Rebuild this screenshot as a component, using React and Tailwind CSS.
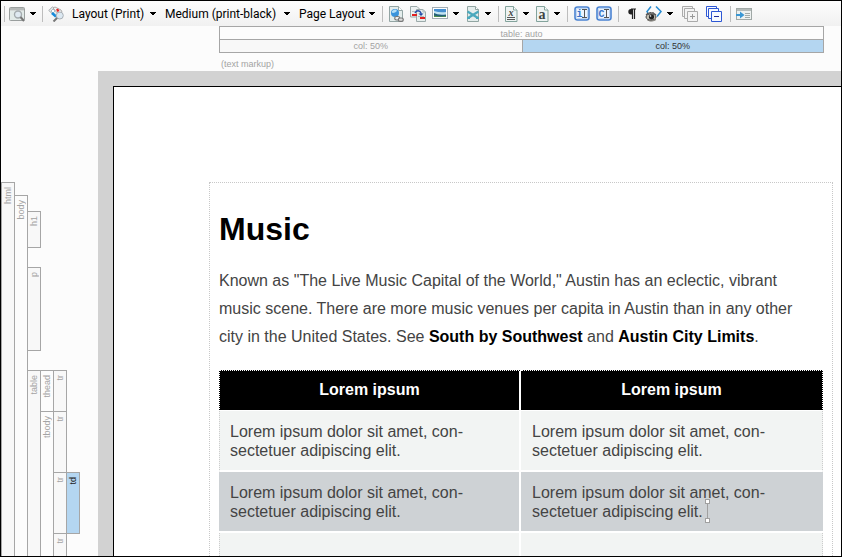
import React from "react";

function Caret() {
  return (
    <svg width="7" height="4" viewBox="0 0 7 4" shapeRendering="crispEdges" aria-hidden="true">
      <path d="M0 0h6v1H5v1H4v1H2V2H1V1H0z" fill="#000" />
    </svg>
  );
}

function Separator() {
  return <span className="h-4 w-px shrink-0 bg-[#bdbdbd]" />;
}

function ToolButton({ label, menu = false, children }) {
  return (
    <button type="button" aria-label={label} title={label} className="flex h-5 shrink-0 items-center gap-[5px]">
      {children}
      {menu && <Caret />}
    </button>
  );
}

function ToolSelect({ label, value, className }) {
  return (
    <label className={`relative flex h-5 shrink-0 items-center ${className}`}>
      <select
        aria-label={label}
        defaultValue={value}
        className="h-5 w-full appearance-none bg-transparent p-0 font-['Roboto',sans-serif] text-[12px] leading-5 text-black outline-none"
      >
        <option>{value}</option>
      </select>
      <span className="pointer-events-none absolute right-0">
        <Caret />
      </span>
    </label>
  );
}

function Svg({ children, w = 16 }) {
  return (
    <svg width={w} height="16" viewBox={`0 0 ${w} 16`} fill="none" className="shrink-0" aria-hidden="true">
      {children}
    </svg>
  );
}

function Page() {
  return (
    <>
      <path d="M.5.5h9l4 4v11H.5z" fill="#e4edec" stroke="#93a5a4" />
      <path d="M9.5.5v4h4" fill="#fff" stroke="#93a5a4" />
    </>
  );
}

function PreviewIcon() {
  return (
    <Svg>
      <rect x=".5" y="1.5" width="15" height="13" rx="1" fill="#e2eae8" stroke="#9a9f9e" />
      <path d="M1 2h14v2H1z" fill="#b5b9b8" />
      <path d="M1 4.5h14" stroke="#d4d8d7" />
      <circle cx="9" cy="8.5" r="3.5" fill="#dfe9f1" stroke="#a4abae" strokeWidth="1.4" />
      <path d="m11.5 11 3.5 4" stroke="#777" strokeWidth="2" />
    </Svg>
  );
}

function StylesIcon() {
  return (
    <Svg>
      <path d="m.8 4.5 3.7-3.7L14 9.5 10 13z" fill="#e9eeef" stroke="#a4a9ab" />
      <path d="m5 2 2-1 6 3 1 2-3 3z" fill="#f2f4f4" stroke="#aaa" />
      <path d="m3 5 2-2 2 2-2 2z" fill="#fff" stroke="#aebbc2" />
      <path d="m4 7 4 3.5" stroke="#168bdc" strokeWidth="2.6" />
      <path d="m9 3 1.500 2.500" stroke="#e52224" strokeWidth="2.400" />
      <circle cx="11.8" cy="9.5" r="3.5" fill="#dce8f1" stroke="#a8afb5" />
      <path d="m9 12-3.5 3.5" stroke="#777" strokeWidth="2" />
    </Svg>
  );
}

function LinkIcon() {
  return (
    <Svg w={15}>
      <Page />
      <circle cx="6" cy="7" r="4" fill="#3b94dc" />
      <path d="M3 5c2-2 4-2 5 0L6 6.500 4 7 3 6.500z" fill="#b5dff7" />
      <rect x="5.7" y="10.5" width="5" height="3.5" rx="1.7" fill="#eee" stroke="#777" strokeWidth="1.2" />
      <rect x="9.3" y="12" width="5" height="3.4" rx="1.7" fill="#ddd" stroke="#777" strokeWidth="1.2" />
    </Svg>
  );
}

function CrossRefIcon() {
  return (
    <Svg>
      <path d="M.5.5H7L9.5 3v8H.5z" fill="#edf2f2" stroke="#9caaaa" />
      <path d="M6.5 3.5H13l2.5 2.5v9.5h-9z" fill="#e6eeed" stroke="#9caaaa" />
      <path d="M13 3.5V6h2.500M2 5.500h3M8 10.500h6" stroke="#b1bdbd" />
      <path d="M2 8h5v2H2zM10 11h5v2h-5z" fill="#e32122" />
      <path d="M5 7c1-3 5-3 6 0v1" stroke="#2148a5" strokeWidth="1.3" />
      <path d="M8.500 7.500h5L11 10z" fill="#2148a5" />
    </Svg>
  );
}

function ImageIcon() {
  return (
    <Svg>
      <rect x=".5" y="1.5" width="15" height="11" fill="#fff" stroke="#a2adb3" />
      <path d="M2 3h12v8H2z" fill="#458fd0" />
      <path d="M2 5q6 2 12 1v3H2z" fill="#c3e5f2" />
      <path d="M2 7q4 2.500 12 1.500V11H2z" fill="#24607a" />
      <path d="M2 9.500q6 1.500 12 .5v1H2z" fill="#529348" />
    </Svg>
  );
}

function VariableIcon() {
  return (
    <Svg w={14}>
      <path d="M1.5.5h8l3 3v12h-11z" fill="#e4edec" stroke="#91a5a2" />
      <path d="M9.5.5v3h3" fill="#fff" stroke="#91a5a2" />
      <path d="M1.500 5.500 12 12M12.500 5.500 2 12" stroke="#4aa9bd" strokeWidth="2.200" />
      <path d="M1 12h3M10 12h3" stroke="#4aa9bd" strokeWidth="2" />
    </Svg>
  );
}

function LetterPage({ letter, underlined }) {
  return (
    <Svg w={13}>
      <path d="M.5.5h8L12 4v11.5H.5z" fill="#edf3f2" stroke="#83a39c" />
      <path d="M8.5.5V4H12" fill="#fff" stroke="#83a39c" />
      <text
        x="6"
        y={underlined ? 10 : 13}
        textAnchor="middle"
        fill="#3e4443"
        fontFamily="Liberation Serif, serif"
        fontWeight="700"
        fontStyle={underlined ? "italic" : "normal"}
        fontSize={underlined ? 10 : 14}
      >
        {letter}
      </text>
      {underlined && <path d="M2 11.5h8M2 13.5h8" stroke="#555" />}
    </Svg>
  );
}

function CursorBadge({ letter }) {
  return (
    <Svg>
      <rect x="1" y="1" width="14" height="13" rx="2.5" fill="#edf5ff" stroke="#4a83d2" strokeWidth="1.600" />
      <rect x="2.5" y="2.5" width="11" height="10" rx="1" stroke="#c0d8f3" />
      <text x="5.5" y="11" textAnchor="middle" fill="#3975c9" fontFamily="Liberation Mono, monospace" fontWeight="700" fontSize="10">
        {letter}
      </text>
      <path d="M8 3.5h5M8 11.5h5M10.5 4v7" stroke="#555" />
    </Svg>
  );
}

function PilcrowIcon() {
  return (
    <Svg w={10}>
      <path d="M4 3h5M5.500 3v10M7.500 3v10" stroke="#222" strokeWidth="1.2" />
      <path d="M5 3H4a2.700 2.700 0 0 0 0 5.400h1z" fill="#222" />
    </Svg>
  );
}

function MarkupEyeIcon() {
  return (
    <Svg w={17}>
      <path d="m6 .5-4 5 1 1.500M11 .5l5 5-4 5" stroke="#278bd1" strokeWidth="1.5" />
      <path d="M1 9c3-3 7-3 10 0M2 7l1 1M5 6v1M8 6v1" stroke="#555" strokeWidth="1.2" />
      <ellipse cx="6" cy="11" rx="5" ry="3.200" fill="#c4c0b4" stroke="#464646" />
      <circle cx="6.500" cy="10.800" r="2.600" fill="#222" />
      <circle cx="5.500" cy="10" r=".8" fill="#fff" />
      <path d="M2 13.500c2 2 6 2 9 0" stroke="#6a675f" />
    </Svg>
  );
}

function LayersIcon({ plus }) {
  const stroke = plus ? "#aaa" : "#2d57d4";
  return (
    <Svg>
      <g fill={plus ? "#f3f3f3" : "#f7faff"} stroke={stroke}>
        <path d="M.5.5h10v10H.5z" />
        <path d="M2.500 2.500h10v10h-10z" />
        <path d="M5.500 5.500h10v10h-10z" />
      </g>
      <path d={plus ? "M8 10.500h5M10.500 8v5" : "M8 10.500h5"} stroke={plus ? "#999" : "#222d99"} />
    </Svg>
  );
}

function InsertPanelIcon() {
  return (
    <Svg>
      <rect x=".5" y="2.5" width="15" height="11" fill="#edf1f0" stroke="#a0a8a6" />
      <path d="M1 3h14v2H1z" fill="#b4bbb9" />
      <path d="M9 7.500h5M9 9.500h5M9 11.500h5" stroke="#a1a9a7" />
      <path d="M0 8h4V5.500L8.500 9 4 12.500V10H0z" fill="#3a97d4" />
    </Svg>
  );
}

function Toolbar() {
  return (
    <header
      role="toolbar"
      className="flex h-[25px] shrink-0 items-center bg-linear-to-b from-[#fdfdfd] to-[#f1f1f1] pl-[3px]"
    >
      <Separator />
      <div className="flex w-[37px] items-center pl-1">
        <ToolButton label="Preview" menu><PreviewIcon /></ToolButton>
      </div>
      <Separator />
      <div className="flex items-center gap-2 pl-[5px]">
        <ToolButton label="Styles"><StylesIcon /></ToolButton>
        <ToolSelect label="Layout" value="Layout (Print)" className="w-[85px]" />
        <ToolSelect label="Medium" value="Medium (print-black)" className="w-[126px]" />
        <ToolSelect label="Page layout" value="Page Layout" className="w-[77px]" />
      </div>
      <div className="flex items-center gap-[6px] pl-[6px]">
        <Separator />
        <ToolButton label="Insert hyperlink"><LinkIcon /></ToolButton>
        <ToolButton label="Insert cross-reference"><CrossRefIcon /></ToolButton>
        <ToolButton label="Insert image" menu><ImageIcon /></ToolButton>
        <ToolButton label="Insert variable" menu><VariableIcon /></ToolButton>
        <Separator />
        <ToolButton label="Character style" menu><LetterPage letter="x" underlined /></ToolButton>
        <ToolButton label="Font" menu><LetterPage letter="a" /></ToolButton>
        <Separator />
        <ToolButton label="Insert before cursor"><CursorBadge letter="i" /></ToolButton>
        <ToolButton label="Change at cursor"><CursorBadge letter="C" /></ToolButton>
        <Separator />
      </div>
      <div className="flex items-center gap-2 px-2">
        <ToolButton label="Show paragraph marks"><PilcrowIcon /></ToolButton>
        <ToolButton label="Show markup" menu><MarkupEyeIcon /></ToolButton>
        <ToolButton label="Expand all"><LayersIcon plus /></ToolButton>
        <ToolButton label="Collapse all"><LayersIcon /></ToolButton>
      </div>
      <Separator />
      <div className="pl-[5px]">
        <ToolButton label="Insert panel"><InsertPanelIcon /></ToolButton>
      </div>
    </header>
  );
}

function ColumnRuler() {
  return (
    <div className="h-[45px] shrink-0 pr-[17px] pl-[218px] text-[9px] text-[#a3a3a3]">
      <div className="border border-[#a6a6a6] text-center leading-3">
        <div className="h-[13px] border-b border-[#a6a6a6] leading-[14px]">table: auto</div>
        <div className="grid grid-cols-2 leading-[13px]">
          <div className="h-3 bg-[#f8f8f8]">col: 50%</div>
          <div className="h-3 border-l border-[#a6a6a6] bg-[#b4d6f1] text-[#333]">col: 50%</div>
        </div>
      </div>
      <div className="pt-[5px] pl-0.5 leading-3">(text markup)</div>
    </div>
  );
}

function Tag({ name, className }) {
  return (
    <div className={`shrink-0 border-[#a6a6a6] pt-1 ${className}`}>
      <span className="block w-3 rotate-180 leading-3 [writing-mode:vertical-rl]">{name}</span>
    </div>
  );
}

function TagTree() {
  return (
    <aside className="flex w-[97px] shrink-0 overflow-hidden pt-[111px] text-[9px] text-[#a3a3a3]">
      <Tag name="html" className="w-[14px] border-x border-t bg-[#f8f8f8]" />
      <Tag name="body" className="mt-[13px] w-[13px] border-t border-r" />
      <div className="flex flex-col pt-[29px]">
        <Tag name="h1" className="h-[37px] w-[13px] border-y border-r bg-[#f8f8f8]" />
        <Tag name="p" className="mt-[19px] h-[84px] w-[13px] border-y border-r bg-[#f8f8f8]" />
        <div className="mt-[19px] flex flex-1">
          <Tag name="table" className="w-[13px] border-t border-r bg-[#f8f8f8]" />
          <div className="flex flex-col">
            <Tag name="thead" className="h-[41px] w-[13px] border-t border-r" />
            <Tag name="tbody" className="w-[13px] flex-1 border-t border-r" />
          </div>
          <div className="flex flex-col">
            <Tag name="tr" className="h-[41px] w-[13px] border-t border-r bg-[#f8f8f8]" />
            <Tag name="tr" className="h-[61px] w-[13px] border-t border-r bg-[#f8f8f8]" />
            <div className="flex">
              <Tag name="tr" className="h-[61px] w-[13px] border-t border-r bg-[#f8f8f8]" />
              <Tag name="td" className="h-[62px] w-[13px] border-y border-r bg-[#b4d6f1] text-[#222]" />
            </div>
            <Tag name="tr" className="-mt-px w-[13px] flex-1 border-t border-r bg-[#f8f8f8]" />
          </div>
        </div>
      </div>
    </aside>
  );
}

function TextCursor() {
  return (
    <span className="relative">
      <svg width="5" height="24" viewBox="0 0 5 24" fill="none" shapeRendering="crispEdges" className="absolute -top-1 left-0.5" aria-hidden="true">
        <path d="M2.5 4v16" stroke="#a0a0a0" />
        <path d="M.5.5h4v4h-4zM.5 19.5h4v4h-4z" fill="#fff" stroke="#a0a0a0" />
      </svg>
    </span>
  );
}

function CellText() {
  return (
    <>
      Lorem ipsum dolor sit amet, con-
      <br />
      sectetuer adipiscing elit.
    </>
  );
}

function Document() {
  return (
    <article className="min-h-full border border-b-0 border-dotted border-[#c8c8c8] px-[9px]">
      <h1 className="pt-7 text-[32px] leading-[37px] font-bold text-black">Music</h1>
      <p className="pt-[19px] text-base leading-7">
        Known as "The Live Music Capital of the World," Austin has an eclectic, vibrant
        <br />
        music scene. There are more music venues per capita in Austin than in any other
        <br />
        city in the United States. See <b className="text-black">South by Southwest</b> and{" "}
        <b className="text-black">Austin City Limits</b>.
      </p>
      <table className="mt-[19px] w-full table-fixed border-separate border-spacing-0 text-left text-base leading-[19px]">
        <thead className="text-center align-top text-white">
          <tr className="h-[41px]">
            <th className="border-t border-r-2 border-b border-l border-dotted border-white bg-black pt-[9px] align-top [border-bottom-style:solid] [border-right-style:solid]">Lorem ipsum</th>
            <th className="border-t border-r border-b border-dotted border-white bg-black pt-[9px] align-top [border-bottom-style:solid]">Lorem ipsum</th>
          </tr>
        </thead>
        <tbody className="align-top">
          <tr className="h-[61px] bg-[#f2f4f3]">
            <td className="border-r-2 border-b-2 border-l border-white border-l-[#ccc] px-2.5 pt-[11px] [border-left-style:dotted]"><CellText /></td>
            <td className="border-r border-b-2 border-white border-r-[#ccc] px-[11px] pt-[11px] [border-right-style:dotted]"><CellText /></td>
          </tr>
          <tr className="h-[61px] bg-[#ced2d5]">
            <td className="border-r-2 border-b-2 border-white px-[11px] pt-[11px]"><CellText /></td>
            <td className="border-b-2 border-white px-[11px] pt-[11px]"><CellText /><TextCursor /></td>
          </tr>
          <tr className="h-[61px] bg-[#f2f4f3]">
            <td className="border-r-2 border-l border-white border-l-[#ccc] [border-left-style:dotted]" />
            <td className="border-r border-[#ccc] [border-right-style:dotted]" />
          </tr>
        </tbody>
      </table>
    </article>
  );
}

export default function App() {
  return (
    <div className="flex h-screen flex-col overflow-hidden border border-black bg-[#fcfcfc] font-['Liberation_Sans',Arial,sans-serif] text-[#444]">
      <Toolbar />
      <ColumnRuler />
      <div className="flex min-h-0 flex-1">
        <TagTree />
        <main className="min-w-0 flex-1 overflow-hidden bg-[#d2d2d2] pt-[15px] pl-[15px]">
          <div className="h-full border-t border-l border-black bg-white pt-[95px] pr-2 pl-[95px]">
            <Document />
          </div>
        </main>
      </div>
    </div>
  );
}
